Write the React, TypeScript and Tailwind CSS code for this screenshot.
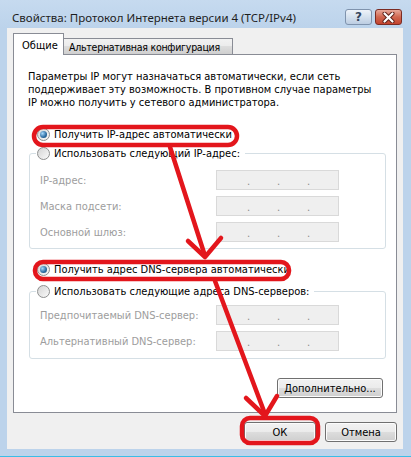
import type { ReactNode } from 'react';

function Radio({ checked }: { checked?: boolean }) {
  return (
    <span className="flex h-[13px] w-[13px] shrink-0 items-center justify-center rounded-full border border-[#8e8f8f] bg-linear-to-br from-[#d4d4d4] to-[#fafafa]">
      {checked ? (
        <span className="h-[7px] w-[7px] rounded-full bg-[radial-gradient(circle_at_35%_35%,#a6d8fb,#2a6aa0_60%,#17476e)]" />
      ) : null}
    </span>
  );
}

function RadioRow({ checked, children }: { checked?: boolean; children: ReactNode }) {
  return (
    <div className="flex h-[13px] items-center gap-[4px]">
      <Radio checked={checked} />
      <span className="whitespace-nowrap">{children}</span>
    </div>
  );
}

function IpField() {
  return (
    <div className="h-[20px] w-[123px] border border-[#d9d9d9] bg-[#efefef]">
      <div className="flex pl-[30px] pt-[4px] leading-[13px] text-[#8a8a8a]">
        <span className="w-[30px]">.</span>
        <span className="w-[30px]">.</span>
        <span>.</span>
      </div>
    </div>
  );
}

function WinButton({ children, className }: { children: ReactNode; className: string }) {
  return (
    <button
      type="button"
      className={`h-[20px] rounded-[3px] border border-[#707070] bg-[linear-gradient(#f2f2f2_0%,#ebebeb_50%,#dddddd_50%,#cfcfcf_100%)] text-[11px] leading-[13px] text-black shadow-[inset_0_0_0_1px_#fcfcfc] ${className}`}
    >
      {children}
    </button>
  );
}

function FieldRow({ label }: { label: string }) {
  return (
    <>
      <span className="self-center whitespace-nowrap text-[#9d9d9d]">{label}</span>
      <IpField />
    </>
  );
}

export default function App() {
  return (
    <div className="relative h-[457px] w-[411px] overflow-hidden bg-[#bcd3eb] text-[11px] leading-[13px] text-black font-['DejaVu_Sans_Condensed','Liberation_Sans',sans-serif]">
      <div className="flex h-full flex-col">
        {/* title bar */}
        <div className="flex h-[28px] shrink-0 items-start justify-between bg-linear-to-b from-[#c6daef] to-[#bcd3eb]">
          <span className="whitespace-nowrap pl-[12px] pt-[10px] text-[11.5px] leading-[16px] text-[#1e1e1e] font-['Noto_Sans','Open_Sans',sans-serif]">
            Свойства: Протокол Интернета версии 4 (TCP/IPv4)
          </span>
          <div className="mr-[9px] mt-[9px] flex gap-[3px]">
            <div className="flex h-[16px] w-[27px] items-center justify-center rounded-[3px] border border-[#7f93ad] bg-linear-to-b from-[#eef3f9] via-[#d5e1ee] to-[#bccde2]">
              <span className="text-[12px] font-bold leading-[12px] text-[#35475e] font-['DejaVu_Sans',sans-serif]">?</span>
            </div>
            <div className="flex h-[16px] w-[27px] items-center justify-center rounded-[3px] border border-[#7b2b22] bg-linear-to-b from-[#e7a89a] via-[#d0664f] to-[#c3422d]">
              <svg width="13" height="11" viewBox="0 0 13 11">
                <path d="M2.5 1.5 L10.5 9.5 M10.5 1.5 L2.5 9.5" stroke="#5a1e16" strokeWidth="4" strokeLinecap="round" />
                <path d="M2.5 1.5 L10.5 9.5 M10.5 1.5 L2.5 9.5" stroke="#ffffff" strokeWidth="2.2" strokeLinecap="round" />
              </svg>
            </div>
          </div>
        </div>

        {/* client area */}
        <div className="ml-[7px] mr-[8px] flex h-[421px] shrink-0 flex-col bg-[#f0f0f0] px-[6px] pt-[5px]">
          <div className="flex h-[21px] items-end">
            <div className="relative z-10 -mb-px h-[22px] w-[51px] border border-b-0 border-[#898c95] bg-white pl-[8px] pt-[5px]">
              Общие
            </div>
            <div className="h-[16px] w-[169px] overflow-hidden whitespace-nowrap border-r border-t border-[#898c95] bg-[linear-gradient(#f2f2f2_0%,#ebebeb_50%,#dddddd_50%,#cfcfcf_100%)] pl-[5px] pt-[2px] text-[10.5px] tracking-[-0.25px]">
              Альтернативная конфигурация
            </div>
          </div>

          <div className="flex h-[359px] flex-col border border-[#898c95] bg-white">
            <p className="whitespace-nowrap pl-[14px] pt-[15px]">
              Параметры IP могут назначаться автоматически, если сеть
              <br />
              поддерживает эту возможность. В противном случае параметры
              <br />
              IP можно получить у сетевого администратора.
            </p>

            <div className="ml-[23px] mt-[19px]">
              <RadioRow checked>Получить IP-адрес автоматически</RadioRow>
            </div>

            <fieldset className="ml-[15px] mt-[6px] w-[357px] rounded-[3px] border border-[#d5dfe5] pb-[6px]">
              <legend className="ml-[6px] pl-[1px] pr-[5px]">
                <RadioRow>Использовать следующий IP-адрес:</RadioRow>
              </legend>
              <div className="grid grid-cols-[176px_123px] gap-y-[6px] pl-[10px] pt-[10px]">
                <FieldRow label="IP-адрес:" />
                <FieldRow label="Маска подсети:" />
                <FieldRow label="Основной шлюз:" />
              </div>
            </fieldset>

            <div className="ml-[23px] mt-[14px]">
              <RadioRow checked>Получить адрес DNS-сервера автоматически</RadioRow>
            </div>

            <fieldset className="ml-[15px] mt-[9px] w-[357px] rounded-[3px] border border-[#d5dfe5] pb-[7px]">
              <legend className="ml-[6px] pl-[1px] pr-[5px]">
                <RadioRow>Использовать следующие адреса DNS-серверов:</RadioRow>
              </legend>
              <div className="grid grid-cols-[176px_123px] gap-y-[6px] pl-[10px] pt-[7px]">
                <FieldRow label="Предпочитаемый DNS-сервер:" />
                <FieldRow label="Альтернативный DNS-сервер:" />
              </div>
            </fieldset>

            <div className="mr-[13px] mt-[19px] flex justify-end">
              <WinButton className="w-[106px]">Дополнительно...</WinButton>
            </div>
          </div>

          <div className="mt-[9px] flex justify-end gap-[9px]">
            <WinButton className="w-[72px] border-[#3c7fb1]">ОК</WinButton>
            <WinButton className="w-[72px]">Отмена</WinButton>
          </div>
        </div>

        <div className="flex-1 bg-[#bcd3eb]" />
        <div className="h-px bg-[#3bbde6]" />
      </div>

      {/* red annotations */}
      <svg className="pointer-events-none absolute inset-0" width="411" height="457" viewBox="0 0 411 457">
        <g fill="none" stroke="#e3161c" strokeWidth="4.5" strokeLinecap="round" strokeLinejoin="round">
          <rect x="34" y="127" width="203" height="18" rx="9" />
          <rect x="35" y="262" width="254" height="17" rx="8" />
          <rect x="242" y="418" width="76" height="25" rx="8" />
          <path d="M170 147 L205 256" />
          <path d="M188 241 L205 257 L221 238" />
          <path d="M215 281 L265 414" />
          <path d="M246 398 L265 416 L277 396" />
        </g>
      </svg>
    </div>
  );
}
